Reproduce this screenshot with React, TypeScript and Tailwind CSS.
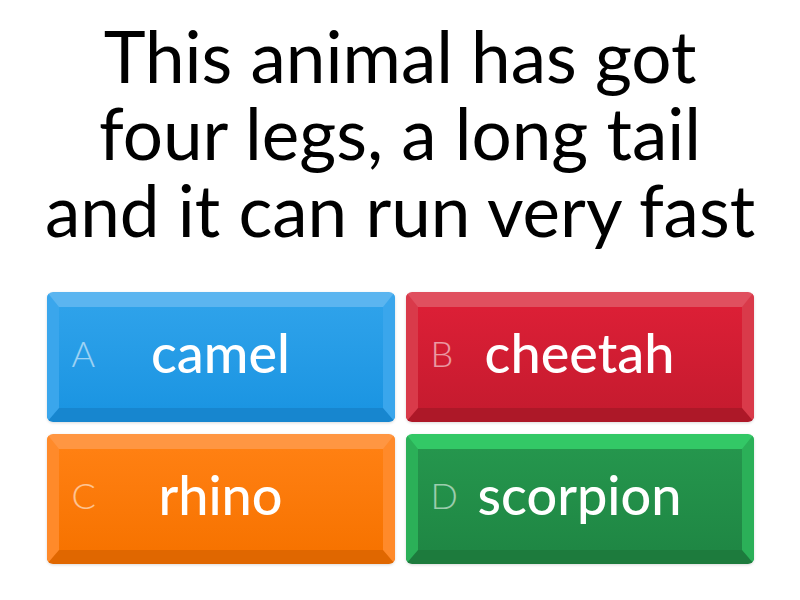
import React from 'react';

interface Answer {
  letter: string;
  text: string;
  face: string;
}

const answers: Answer[] = [
  {
    letter: 'A',
    text: 'camel',
    face: 'bg-gradient-to-b from-[#2ea2ea] to-[#1b95e2] border-t-[#5bb5f0] border-x-[#3aa6ec] border-b-[#1786cf]',
  },
  {
    letter: 'B',
    text: 'cheetah',
    face: 'bg-gradient-to-b from-[#dc1f36] to-[#c61b2f] border-t-[#e0505f] border-x-[#d93a4a] border-b-[#ad1828]',
  },
  {
    letter: 'C',
    text: 'rhino',
    face: 'bg-gradient-to-b from-[#ff8012] to-[#f77300] border-t-[#ff9642] border-x-[#ff8a2a] border-b-[#e06700]',
  },
  {
    letter: 'D',
    text: 'scorpion',
    face: 'bg-gradient-to-b from-[#25964d] to-[#1f8744] border-t-[#33c866] border-x-[#2bb058] border-b-[#1d7b3d]',
  },
];

const App: React.FC = () => {
  return (
    <div className="w-[800px] h-[600px] bg-white flex flex-col items-center font-['Lato',sans-serif]">
      {/* Question */}
      <h1 className="mt-[17px] text-center text-black text-[71px] leading-[77px] font-normal whitespace-nowrap">
        This animal has got
        <br />
        four legs, a long tail
        <br />
        and it can run very fast
      </h1>

      {/* Answer tiles */}
      <div className="mt-[44px] grid grid-cols-2 gap-x-[11px] gap-y-[12px]">
        {answers.map((a) => (
          <div
            key={a.letter}
            className={`w-[348px] h-[130px] rounded-md border-solid border-t-[15px] border-b-[14px] border-x-[12px] pb-[9px] shadow-[0_1px_3px_rgba(0,0,0,0.15)] flex items-center ${a.face}`}
          >
            <span className="w-[50px] pl-[13px] text-[36px] font-light leading-none text-white/55">{a.letter}</span>
            <span className="flex-1 pr-[50px] text-center text-white text-[54px] font-medium leading-none">
              {a.text}
            </span>
          </div>
        ))}
      </div>
    </div>
  );
};

export default App;
